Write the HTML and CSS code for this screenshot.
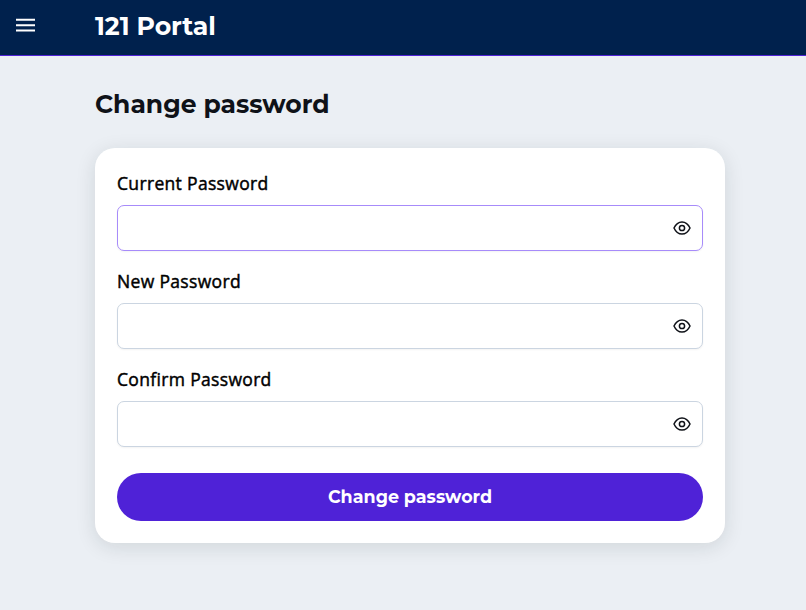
FILE: index.html
```html
<!DOCTYPE html>
<html lang="en">
<head>
<meta charset="utf-8">
<title>121 Portal</title>
<link rel="stylesheet" href="styles.css">
</head>
<body>
<header class="topbar">
  <button class="menu" aria-label="Menu"><svg width="20" height="20" viewBox="0 0 20 20"><path d="M0 4.8h19M0 10.2h19M0 15.6h19"/></svg></button>
  <span class="brand">121 Portal</span>
</header>
<main class="content">
  <h1 class="title">Change password</h1>
  <form class="card">
    <label class="label" for="current">Current Password</label>
    <div class="field focused"><input id="current" type="password"><svg class="eye" viewBox="0 0 18 18"><path d="M1 9C3 4.6 5.7 2.9 9 2.9S15 4.6 17 9c-2 4.4-4.7 6.1-8 6.1S3 13.4 1 9Z"/><circle cx="9" cy="9" r="2.6"/></svg></div>
    <label class="label" for="new">New Password</label>
    <div class="field"><input id="new" type="password"><svg class="eye" viewBox="0 0 18 18"><path d="M1 9C3 4.6 5.7 2.9 9 2.9S15 4.6 17 9c-2 4.4-4.7 6.1-8 6.1S3 13.4 1 9Z"/><circle cx="9" cy="9" r="2.6"/></svg></div>
    <label class="label" for="confirm">Confirm Password</label>
    <div class="field"><input id="confirm" type="password"><svg class="eye" viewBox="0 0 18 18"><path d="M1 9C3 4.6 5.7 2.9 9 2.9S15 4.6 17 9c-2 4.4-4.7 6.1-8 6.1S3 13.4 1 9Z"/><circle cx="9" cy="9" r="2.6"/></svg></div>
    <button class="submit" type="button">Change password</button>
  </form>
</main>
</body>
</html>
```
FILE: styles.css
```css
* { box-sizing: border-box; }
body { margin: 0; min-height: 610px; background: #ebeff4; color: #0f1218; font-family: "Open Sans", sans-serif; }
button { border: 0; padding: 0; font: inherit; }
svg { display: block; }
.topbar { height: 56px; display: flex; align-items: flex-start; background: #00214d; border-bottom: 1px solid #4f22d7; }
.menu { width: 20px; height: 20px; margin: 15px 59px 0 16px; background: none; }
.menu path { stroke: #fff; stroke-width: 2; }
.brand, .title, .submit { font-family: Montserrat, Inter, sans-serif; font-weight: 700; white-space: nowrap; }
.brand { margin-top: 10px; color: #fff; font-size: 25.2px; line-height: 32px; letter-spacing: -.05px; }
.content { width: 630px; margin: 0 auto 0 95px; padding-top: 32px; }
.title { margin: 0; color: #0f1218; font-size: 25px; line-height: 32px; }
.card { margin-top: 28px; height: 395px; padding: 22px; border-radius: 20px; background: #fff; box-shadow: 0 4px 20px rgba(15, 30, 30, .12); }
.label { display: block; height: 27px; margin-bottom: 8px; font-size: 17.5px; line-height: 27px; font-weight: 500; letter-spacing: .33px; color: #000; -webkit-text-stroke: .45px #000; }
.field { display: flex; align-items: center; height: 46px; margin-bottom: 17px; padding-right: 11.5px; border: 1px solid #cbd5e1; border-radius: 7px; background: #fff; box-shadow: 0 1px 2px rgba(18, 18, 23, .05); }
.focused { border-color: #a78bfa; }
.field input { flex: 1; min-width: 0; height: 100%; padding: 0 12px; border: 0; outline: 0; background: transparent; }
.eye { width: 18px; height: 18px; fill: none; stroke: #0f1218; stroke-width: 1.5; }
.submit { display: block; width: 100%; height: 48px; margin-top: 26px; border-radius: 24px; background: #4f22d7; color: #fff; font-size: 17.5px; line-height: 48px; text-align: center; }
```
